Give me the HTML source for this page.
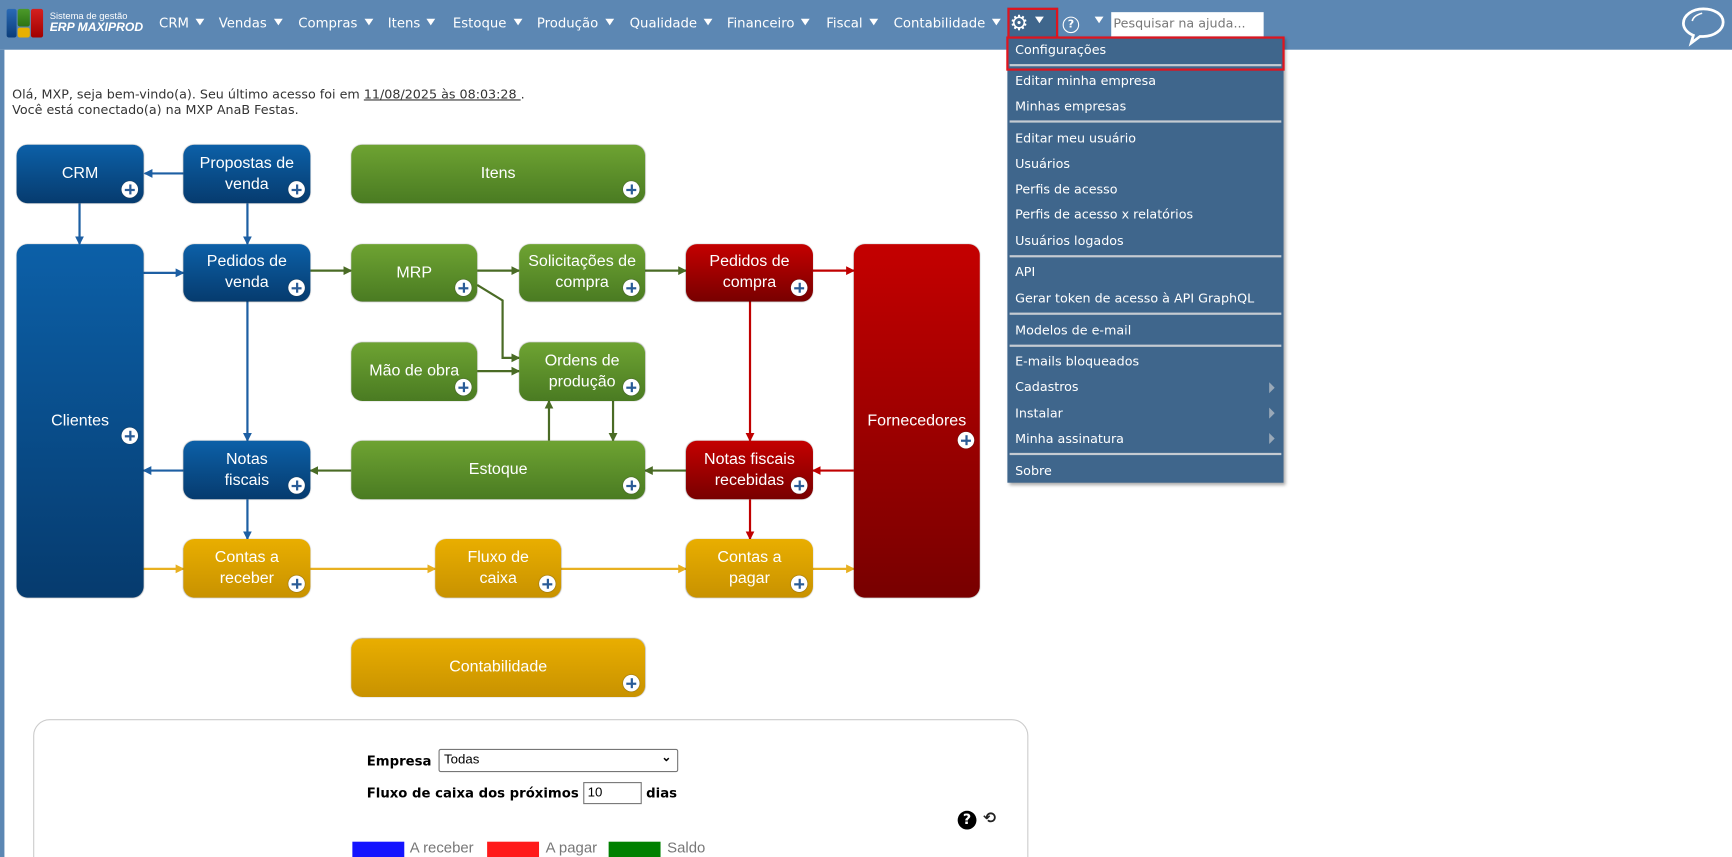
<!DOCTYPE html>
<html><head><meta charset="utf-8"><style>
html,body{margin:0;padding:0;background:#fff;overflow:hidden;width:1732px;height:857px}
#outer{position:absolute;left:0;top:0;width:1732px;height:857px;overflow:hidden}
#w{position:absolute;left:0;top:0;width:1568px;height:776px;overflow:hidden;transform:scale(1.104592);transform-origin:0 0;font-family:"DejaVu Sans","Liberation Sans",sans-serif}
.hdr{position:absolute;left:0;top:0;width:1568px;height:45px;background:#5c87b3}
.strip{position:absolute;left:0;top:45px;width:4px;height:731px;background:#5c87b3}
.m{position:absolute;top:14px;color:#fff;font-size:12px;white-space:nowrap}
.tri{display:inline-block;width:0;height:0;border-left:4.5px solid transparent;border-right:4.5px solid transparent;border-top:6px solid #fff;margin-left:6px;vertical-align:2px}
.dd{position:absolute;left:912px;top:33px;width:250px;height:404px;background:#3f668c;box-shadow:2px 2px 3px rgba(0,0,0,.35)}
.it{position:absolute;left:7px;color:#fff;font-size:11.5px;white-space:nowrap}
.sep{position:absolute;left:2px;width:246px;height:2px;background:#c5cbd2}
.arr{position:absolute;right:8px;width:0;height:0;border-top:5px solid transparent;border-bottom:5px solid transparent;border-left:5px solid #9aa9b8}
.txt{position:absolute;color:#333;font-size:11.5px;left:11px}
.b{position:absolute;border-radius:10px;color:#fff;font-family:"Liberation Sans",Arial,sans-serif;font-size:14.5px;display:flex;align-items:center;justify-content:center;text-align:center;line-height:19px;box-shadow:0 0 1px rgba(0,0,0,.4)}
.bl{background:linear-gradient(#0c60a8,#063b6e)}
.gr{background:linear-gradient(#6ea332,#4a7b22)}
.rd{background:linear-gradient(#c40000,#780000)}
.yl{background:linear-gradient(#e9ae00,#c89200)}
.p{position:absolute;right:5px;bottom:5px;width:15px;height:15px;border-radius:50%;background:#fff;box-shadow:0 0 1px #333}
.p:before{content:"";position:absolute;left:3px;top:6.5px;width:9px;height:2px;background:#2a5c97}
.p:after{content:"";position:absolute;left:6.5px;top:3px;width:2px;height:9px;background:#2a5c97}
.lbl{position:absolute;font-size:12px;font-weight:bold;color:#000}
</style></head><body><div id="outer"><div id="w">
<div class="hdr"></div><div class="strip"></div>
<div style="position:absolute;left:6px;top:8px;width:9px;height:26px;background:linear-gradient(#2a6ab5,#0b3d7a);border-radius:2px"></div>
<div style="position:absolute;left:16px;top:8px;width:11px;height:16px;background:linear-gradient(#4c9a2a,#2c7314);border-radius:2px"></div>
<div style="position:absolute;left:16px;top:25px;width:11px;height:9px;background:#e8b000;border-radius:2px"></div>
<div style="position:absolute;left:28px;top:8px;width:11px;height:26px;background:linear-gradient(#d52020,#a00000);border-radius:2px"></div>
<div style="position:absolute;left:45px;top:9px;color:#fff;font-size:8.5px;font-family:'Liberation Sans',sans-serif">Sistema de gestão</div>
<div style="position:absolute;left:45px;top:19px;color:#fff;font-size:11px;font-weight:bold;font-style:italic;font-family:'Liberation Sans',sans-serif">ERP MAXIPROD</div>
<div class="m" style="left:144px">CRM<span class="tri"></span></div>
<div class="m" style="left:198px">Vendas<span class="tri"></span></div>
<div class="m" style="left:270px">Compras<span class="tri"></span></div>
<div class="m" style="left:351px">Itens<span class="tri"></span></div>
<div class="m" style="left:410px">Estoque<span class="tri"></span></div>
<div class="m" style="left:486px">Produção<span class="tri"></span></div>
<div class="m" style="left:570px">Qualidade<span class="tri"></span></div>
<div class="m" style="left:658px">Financeiro<span class="tri"></span></div>
<div class="m" style="left:748px">Fiscal<span class="tri"></span></div>
<div class="m" style="left:809px">Contabilidade<span class="tri"></span></div>
<div style="position:absolute;left:912px;top:7px;width:42px;height:27px;background:#3f668c;border:2px solid #e0141e"></div>
<div style="position:absolute;left:914px;top:10px;color:#fff;font-size:19px;line-height:22px">⚙</div>
<div class="m" style="left:937px;top:12px"><span class="tri" style="margin:0"></span></div>
<div style="position:absolute;left:962px;top:15px;width:13px;height:13px;border:1.5px solid #fff;border-radius:50%;color:#fff;font-size:10px;line-height:13px;text-align:center;font-weight:bold">?</div>
<div class="m" style="left:985px;top:12px"><span class="tri"></span></div>
<div style="position:absolute;left:1006px;top:11px;width:138px;height:22px;background:#fff;color:#777;font-size:11.5px;line-height:21px;padding-left:2px;box-sizing:border-box">Pesquisar na ajuda...</div>
<svg style="position:absolute;left:1520px;top:5px" width="44" height="38" viewBox="0 0 44 38"><path d="M22 3C12 3 4 9 4 16c0 5 4 9 9 11l-2 7 8-6c1 0 2 0 3 0 10 0 18-6 18-13S32 3 22 3z" fill="none" stroke="#fff" stroke-width="2.5"/><path d="M12 14c1-4 5-6 9-7" fill="none" stroke="#fff" stroke-width="1.5"/></svg>
<div class="dd">
<div class="it" style="top:5px">Configurações</div>
<div class="sep" style="top:25px"></div>
<div class="it" style="top:33px">Editar minha empresa</div>
<div class="it" style="top:56px">Minhas empresas</div>
<div class="sep" style="top:76px"></div>
<div class="it" style="top:85px">Editar meu usuário</div>
<div class="it" style="top:108px">Usuários</div>
<div class="it" style="top:131px">Perfis de acesso</div>
<div class="it" style="top:154px">Perfis de acesso x relatórios</div>
<div class="it" style="top:178px">Usuários logados</div>
<div class="sep" style="top:198px"></div>
<div class="it" style="top:206px">API</div>
<div class="it" style="top:230px">Gerar token de acesso à API GraphQL</div>
<div class="sep" style="top:250px"></div>
<div class="it" style="top:259px">Modelos de e-mail</div>
<div class="sep" style="top:279px"></div>
<div class="it" style="top:287px">E-mails bloqueados</div>
<div class="it" style="top:310px">Cadastros</div><div class="arr" style="top:313px"></div>
<div class="it" style="top:334px">Instalar</div><div class="arr" style="top:336px"></div>
<div class="it" style="top:357px">Minha assinatura</div><div class="arr" style="top:359px"></div>
<div class="sep" style="top:377px"></div>
<div class="it" style="top:386px">Sobre</div>
</div>
<div style="position:absolute;left:911px;top:33px;width:248px;height:27px;border:2px solid #e0141e"></div>
<div class="txt" style="top:78px">Olá, MXP, seja bem-vindo(a). Seu último acesso foi em <u>11/08/2025 às 08:03:28 </u>.</div>
<div class="txt" style="top:92px">Você está conectado(a) na MXP AnaB Festas.</div>
<svg style="position:absolute;left:0;top:0" width="900" height="640">
<defs>
<marker id="ab" markerWidth="8" markerHeight="8" refX="7" refY="4" orient="auto" markerUnits="userSpaceOnUse"><path d="M0 0L8 4L0 8z" fill="#1d5fa3"/></marker>
<marker id="ag" markerWidth="8" markerHeight="8" refX="7" refY="4" orient="auto" markerUnits="userSpaceOnUse"><path d="M0 0L8 4L0 8z" fill="#4a6b25"/></marker>
<marker id="ar" markerWidth="8" markerHeight="8" refX="7" refY="4" orient="auto" markerUnits="userSpaceOnUse"><path d="M0 0L8 4L0 8z" fill="#c00000"/></marker>
<marker id="ay" markerWidth="8" markerHeight="8" refX="7" refY="4" orient="auto" markerUnits="userSpaceOnUse"><path d="M0 0L8 4L0 8z" fill="#e8b020"/></marker>
</defs>
<g stroke-width="2" fill="none">
<g stroke="#1d5fa3" marker-end="url(#ab)">
<path d="M166 157H131"/><path d="M72 184V221"/><path d="M224 184V221"/><path d="M130 247H166"/><path d="M224 273V399"/><path d="M166 426H130"/><path d="M224 452V488"/>
</g>
<g stroke="#4a6b25" marker-end="url(#ag)">
<path d="M281 245H318"/><path d="M432 245H470"/><path d="M584 245H621"/><path d="M432 258L455 272V324H470"/><path d="M432 336H470"/><path d="M318 426H281"/><path d="M497 399V363"/><path d="M555 363V399"/><path d="M621 426H584"/>
</g>
<g stroke="#c00000" marker-end="url(#ar)">
<path d="M736 245H773"/><path d="M773 426H736"/><path d="M679 273V399"/><path d="M679 452V488"/>
</g>
<g stroke="#e8b020" marker-end="url(#ay)">
<path d="M130 515H166"/><path d="M281 515H394"/><path d="M508 515H621"/><path d="M736 515H773"/>
</g></g></svg>
<div class="b bl" style="left:15px;top:131px;width:115px;height:53px">CRM<i class="p"></i></div>
<div class="b bl" style="left:166px;top:131px;width:115px;height:53px">Propostas de<br>venda<i class="p"></i></div>
<div class="b gr" style="left:318px;top:131px;width:266px;height:53px">Itens<i class="p"></i></div>
<div class="b bl" style="left:15px;top:221px;width:115px;height:320px">Clientes<i class="p" style="bottom:139px"></i></div>
<div class="b bl" style="left:166px;top:221px;width:115px;height:52px">Pedidos de<br>venda<i class="p"></i></div>
<div class="b gr" style="left:318px;top:221px;width:114px;height:52px">MRP<i class="p"></i></div>
<div class="b gr" style="left:470px;top:221px;width:114px;height:52px">Solicitações de<br>compra<i class="p"></i></div>
<div class="b rd" style="left:621px;top:221px;width:115px;height:52px">Pedidos de<br>compra<i class="p"></i></div>
<div class="b rd" style="left:773px;top:221px;width:114px;height:320px">Fornecedores<i class="p" style="bottom:135px"></i></div>
<div class="b gr" style="left:318px;top:310px;width:114px;height:53px">Mão de obra<i class="p"></i></div>
<div class="b gr" style="left:470px;top:310px;width:114px;height:53px">Ordens de<br>produção<i class="p"></i></div>
<div class="b bl" style="left:166px;top:399px;width:115px;height:53px">Notas<br>fiscais<i class="p"></i></div>
<div class="b gr" style="left:318px;top:399px;width:266px;height:53px">Estoque<i class="p"></i></div>
<div class="b rd" style="left:621px;top:399px;width:115px;height:53px">Notas fiscais<br>recebidas<i class="p"></i></div>
<div class="b yl" style="left:166px;top:488px;width:115px;height:53px">Contas a<br>receber<i class="p"></i></div>
<div class="b yl" style="left:394px;top:488px;width:114px;height:53px">Fluxo de<br>caixa<i class="p"></i></div>
<div class="b yl" style="left:621px;top:488px;width:115px;height:53px">Contas a<br>pagar<i class="p"></i></div>
<div class="b yl" style="left:318px;top:578px;width:266px;height:53px">Contabilidade<i class="p"></i></div>
<div style="position:absolute;left:30px;top:651px;width:899px;height:160px;border:1px solid #ccc;border-radius:15px"></div>
<div class="lbl" style="left:332px;top:682px">Empresa</div>
<div style="position:absolute;left:397px;top:678px;width:217px;height:21px;border:1px solid #767676;border-radius:2px;box-sizing:border-box;font-size:12px;padding:1px 4px;font-family:'Liberation Sans',sans-serif">Todas<span style="position:absolute;right:5px;top:0;font-size:11px;font-weight:bold">⌄</span></div>
<div class="lbl" style="left:332px;top:711px">Fluxo de caixa dos próximos</div>
<div style="position:absolute;left:528px;top:708px;width:53px;height:20px;border:1px solid #767676;box-sizing:border-box;font-size:12px;padding:1px 3px;font-family:'Liberation Sans',sans-serif">10</div>
<div class="lbl" style="left:585px;top:711px">dias</div>
<div style="position:absolute;left:867px;top:734px;width:17px;height:17px;border-radius:50%;background:#000;color:#fff;font-size:13px;font-weight:bold;text-align:center;line-height:17px">?</div>
<div style="position:absolute;left:890px;top:733px;font-size:14px;font-weight:bold;color:#222">⟲</div>
<div style="position:absolute;left:319px;top:762px;width:47px;height:14px;background:#1414ff"></div>
<div style="position:absolute;left:371px;top:760px;font-size:13.5px;color:#777;font-family:'Liberation Sans',sans-serif">A receber</div>
<div style="position:absolute;left:441px;top:762px;width:47px;height:14px;background:#ff1a1a"></div>
<div style="position:absolute;left:494px;top:760px;font-size:13.5px;color:#777;font-family:'Liberation Sans',sans-serif">A pagar</div>
<div style="position:absolute;left:551px;top:762px;width:47px;height:14px;background:#008000"></div>
<div style="position:absolute;left:604px;top:760px;font-size:13.5px;color:#777;font-family:'Liberation Sans',sans-serif">Saldo</div>
</div></div></body></html>
